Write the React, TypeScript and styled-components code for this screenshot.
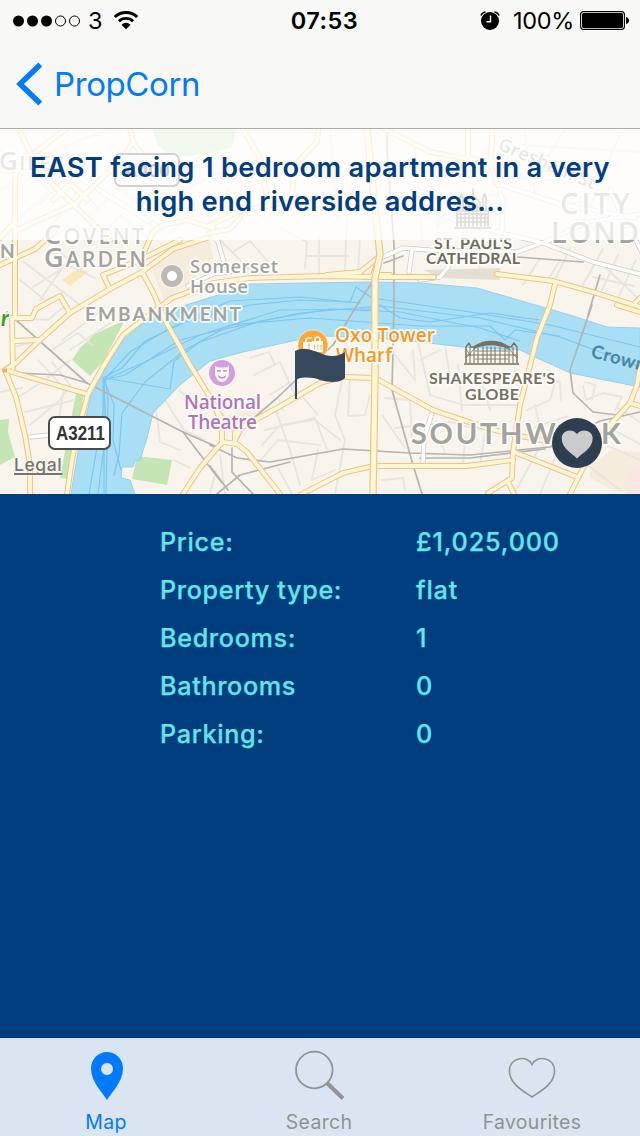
import React from "react";
import styled, { createGlobalStyle } from "styled-components";

const GlobalStyle = createGlobalStyle`
  body { margin: 0; background: #003e80; }
  * { box-sizing: border-box; }
`;

const Screen = styled.div`
  width: 640px;
  height: 1136px;
  display: flex;
  flex-direction: column;
  overflow: hidden;
  background: #003e80;
  font-family: Inter, "Liberation Sans", sans-serif;
`;

const Header = styled.header`
  height: 129px;
  flex: none;
  background: #f8f8f7;
  border-bottom: 1px solid #acacab;
`;

const StatusBar = styled.div`
  height: 40px;
  display: grid;
  grid-template-columns: 1fr auto 1fr;
  align-items: center;
  padding: 1px 11px 0 13px;
  color: #000;
  font-size: 23.5px;
`;

const StatusGroup = styled.div<{ $end?: boolean }>`
  display: flex;
  align-items: center;
  justify-content: ${(p) => (p.$end ? "flex-end" : "flex-start")};
  svg { display: block; flex: none; }
`;

const Carrier = styled.span`
  margin: 0 10px 0 7px;
`;

const Clock = styled.span`
  font-weight: 600;
  font-size: 23.5px;
  letter-spacing: 0.5px;
  padding-left: 7px;
`;

const Percent = styled.span`
  margin: 0 6px 0 13px;
  font-size: 23.5px;
  letter-spacing: -0.35px;
`;

const BackButton = styled.button`
  display: flex;
  align-items: center;
  height: 88px;
  padding: 0 0 0 16px;
  border: 0;
  background: none;
  color: #007aff;
  font: 400 33px Inter, sans-serif;
  letter-spacing: -0.4px;
  svg { display: block; margin-right: 11px; }
`;

const MapArea = styled.section`
  position: relative;
  height: 365px;
  flex: none;
  overflow: hidden;
  background: #f9f5ed;
  > svg { display: block; }
`;

const TitlePanel = styled.h1`
  position: absolute;
  inset: 0 0 auto 0;
  height: 111px;
  margin: 0;
  padding-top: 22px;
  background: rgba(255, 255, 255, 0.75);
  color: #003e80;
  text-align: center;
  font-size: 27.3px;
  line-height: 34px;
  font-weight: 600;
  white-space: nowrap;
`;

const TitleLine = styled.span<{ $spacing: number }>`
  display: block;
  letter-spacing: ${(p) => p.$spacing}px;
`;

const Legal = styled.a`
  position: absolute;
  left: 14px;
  top: 325px;
  color: #747470;
  font-size: 17.5px;
  font-weight: 500;
  line-height: 22px;
  letter-spacing: 0.6px;
  text-decoration: underline;
  text-decoration-thickness: 2px;
  text-decoration-skip-ink: none;
  text-underline-offset: 2px;
  text-shadow: 0 0 2px #fff;
`;

const FavouriteButton = styled.button`
  position: absolute;
  left: 552px;
  top: 289px;
  width: 50px;
  height: 50px;
  padding: 0;
  border: 0;
  border-radius: 50%;
  background: #2c3e50;
  svg { display: block; }
`;

const Details = styled.dl`
  flex: 1;
  margin: 0;
  padding: 24px 0 0 160px;
  color: #62e6ea;
  font-size: 25.2px;
  font-weight: 500;
  -webkit-text-stroke: 0.25px #62e6ea;
`;

const DetailRow = styled.div`
  display: grid;
  grid-template-columns: 256px 1fr;
  align-items: center;
  height: 48px;
`;

const DetailLabel = styled.dt`
  letter-spacing: 0.65px;
`;

const DetailValue = styled.dd`
  margin: 0;
  letter-spacing: 0.85px;
`;

const TabBar = styled.nav`
  height: 99px;
  flex: none;
  display: grid;
  grid-template-columns: 212px 214px 212px;
  border-top: 1px solid #002e60;
  background: #dae5f1;
`;

const Tab = styled.div<{ $active?: boolean }>`
  display: flex;
  flex-direction: column;
  align-items: center;
  color: ${(p) => (p.$active ? "#007aff" : "#929292")};
  font-size: 19.5px;
  line-height: 24px;
  letter-spacing: 0.3px;
  svg { display: block; margin: 8px 0 4px; }
`;

const signalDots = [true, true, true, false, false];

const parks = [
  "M125 320 L95 334 L80 348 L72 360 L90 376 L104 360 Z",
  "M0 420 L9 419 L8 432 L15 457 L0 465 Z",
  "M137 456 L172 460 L167 485 L132 479 Z",
  "M76 393 L84 394 L68 479 L60 478 Z",
  "M152 129 L236 129 L232 148 L205 154 L172 158 L158 145 Z",
];

const river =
  "M71 494 L80 440 L91 396 L107 366 L125 338 L150 318 L180 307 L218 295 L250 284 L370 282 L420 283 L477 288 L570 315 L607 327 L640 328 L640 387 L630 385 L570 373 L520 350 L463 347 L420 342 L373 338 L325 336 L297 340 L243 352 L210 361 L180 385 L153 413 L147 438 L140 460 L135 461 L133 467 L122 467 L121 478 L130 480 L135 494 Z";

const ferries = [
  "M89 494 L103 412 L103 378 L122 368 L145 341 L190 320 L250 305 L300 300 L350 302 L356 287 L372 298 L470 312 L550 325 L640 347",
  "M98 494 L106 430 L104 380 L125 375 L180 340 L220 330 L300 313 L380 306 L480 318 L560 337 L640 367",
  "M106 494 L108 400 L105 378 L170 389 L174 361 L200 342 L260 321 L330 309 L400 312 L480 328 L520 341",
  "M114 475 L119 455 L122 413 L145 382 L185 350 L230 325 L310 318 L420 326 L490 326 L505 340 L515 330 L560 336",
  "M104 494 L104 380 L130 352 L170 328 L230 301 L300 297 L360 303",
  "M121 470 L113 440 L114 405 L104 380 L145 362 L200 335 L280 310 L375 309",
  "M380 305 L400 318 L430 322 L490 313 L540 320",
];

const streets = [
  "M17 318 L48 320 L67 304", "M14 347 L40 340", "M20 396 L45 380 L70 360", "M30 425 L60 400 L70 385 L52 362",
  "M38 360 L64 388 L58 425", "M25 412 L75 400", "M52 350 L78 333 L92 345", "M62 340 L100 312", "M70 350 L112 322",
  "M20 280 L45 300 L65 292", "M24 262 L80 305", "M40 300 L65 264 L95 278", "M55 248 L84 272", "M33 287 L60 270",
  "M0 150 L50 190 L18 220", "M0 190 L55 150 L110 129", "M40 204 L68 176 L100 210", "M55 222 L78 190", "M90 216 L120 188 L140 205",
  "M100 240 L120 215 L150 240", "M118 150 L160 185 L210 150", "M160 200 L220 173 L260 190", "M170 232 L230 190",
  "M220 240 L250 270", "M233 252 L250 241 L270 264", "M282 229 L307 242 L305 268", "M319 238 L319 274", "M306 256 L348 256",
  "M347 210 L345 270", "M360 239 L358 274", "M290 165 L340 175 L370 160", "M275 200 L375 190", "M330 130 L338 220",
  "M395 165 L460 172 L490 165", "M395 198 L500 195", "M415 145 L422 240", "M440 155 L438 228", "M524 129 L535 193", "M565 129 L530 185",
  "M622 129 L580 230", "M520 145 L640 152", "M510 177 L600 184", "M540 258 L523 285", "M560 260 L548 280", "M570 248 L555 280",
  "M603 249 L580 290", "M618 255 L602 290", "M636 260 L618 298", "M593 277 L634 286", "M606 268 L640 300", "M475 240 L480 268",
  "M250 358 L269 352 L275 365", "M254 375 L280 362 L297 400", "M270 395 L290 382 L318 415", "M278 398 L283 410", "M345 365 L335 415 L345 440 L335 494",
  "M262 445 L280 425 L315 420 L340 440", "M265 430 L315 418 L327 450", "M260 461 L278 440 L320 445", "M318 450 L312 480 L335 470",
  "M278 468 L292 494", "M275 408 L290 450 L300 485", "M348 416 L350 377", "M350 416 L365 415 L370 395", "M382 480 L403 478 L405 490",
  "M385 398 L410 400 L412 440", "M395 355 L415 380 L413 350", "M418 342 L430 395", "M395 428 L450 422 L480 430", "M382 415 L405 448",
  "M420 360 L440 350", "M445 345 L450 377", "M458 365 L462 410", "M430 395 L463 405 L520 405", "M480 375 L490 410", "M530 375 L560 382 L561 400",
  "M527 410 L550 400 L555 382", "M583 386 L586 400 L603 393 L622 397 L615 410", "M585 382 L595 385 L592 400", "M527 430 L568 416",
  "M440 440 L445 452", "M465 437 L463 466", "M485 432 L480 465", "M538 450 L515 492", "M555 458 L540 494", "M535 405 L545 450",
  "M594 440 L640 460", "M610 428 L640 444", "M587 465 L620 490", "M618 408 L640 422", "M220 455 L225 494", "M216 470 L210 494",
  "M156 408 L160 442 L180 450", "M165 400 L184 430 L205 440", "M174 460 L190 468", "M179 390 L195 405", "M130 345 L138 340", "M0 392 L22 388",
];

const railways = [
  "M7 312 L87 383 L183 432 L215 446", "M17 373 L60 375 L87 383", "M183 432 L222 483", "M357 305 L333 345 L277 398 L255 417",
  "M377 275 L357 305", "M387 129 L387 150 L394 245 L394 305 L392 390 L413 465 L422 494", "M210 445 L237 458 L270 462 L343 449 L410 453 L470 455 L550 447 L600 421 L640 412",
  "M420 458 L470 458 L545 449", "M600 275 L588 315 L592 305 L570 370 L573 393 L593 412 L617 415", "M217 494 L240 475 L290 462", "M232 448 L232 472 L253 494",
  "M517 257 L583 262", "M384 263 L403 256", "M210 466 L228 490",
];

const whiteRoads = [
  "M80 178 L110 197 L160 228", "M209 228 L218 242 L224 262", "M383 257 L403 248 L430 250 L517 252", "M412 250 L409 272",
  "M420 205 L460 222 L510 235 L543 243 L593 262 L640 274", "M517 252 L550 240 L587 222 L640 214", "M495 183 L560 204 L635 218",
  "M498 185 L503 202 L502 230", "M420 280 L440 277 L449 266", "M188 286 L213 274 L230 272", "M433 410 L424 438 L423 463", "M30 437 L50 435",
  "M636 240 L643 255", "M610 190 L622 215",
];

const mainRoads = [
  "M17 125 L30 152 L53 185 L77 208 L110 240", "M67 128 L23 162 L15 175", "M130 128 L133 142 L123 158 L75 204 L17 230",
  "M133 142 L149 164", "M53 200 L70 184 L88 200", "M243 129 L260 158 L268 205", "M318 129 L317 142 L295 165 L292 192 L300 210",
  "M210 225 L240 211 L300 200", "M210 233 L230 229 L240 218", "M377 125 L430 152 L463 158 L493 162", "M468 125 L468 158", "M493 125 L490 165 L498 185",
  "M0 265 L35 249 L54 232", "M15 168 L15 315 L12 320 L13 368", "M0 238 L15 222",
  "M5 370 L16 363 L42 338 L70 313 L110 289 L142 272 L173 249 L207 238", "M12 318 L32 318 L36 309 L60 296 L70 313",
  "M14 341 L40 340", "M145 250 L153 232 L163 225 L187 220 L213 228", "M110 289 L103 275 L140 260 L180 240",
  "M5 370 L87 394", "M5 370 L16 397 L25 435 L30 465 L30 494",
  "M67 494 L72 460 L78 430 L88 394 L104 365 L123 335 L153 312 L172 298 L213 283 L250 278 L327 276 L375 277 L434 277",
  "M142 272 L153 292 L165 320 L190 365 L213 402 L222 425 L222 442", "M210 402 L224 420 L235 429 L235 443",
  "M183 494 L200 468 L217 448 L223 442 L237 444 L247 452 L280 494", "M235 440 L241 428 L277 408 L320 383 L343 377 L375 378 L433 410 L487 428 L510 434 L545 441",
  "M327 275 L360 272 L380 256", "M367 125 L375 208 L380 255 L375 278 L375 378 L373 465 L373 494", "M380 255 L373 275 L390 275",
  "M300 495 L343 473 L373 466 L467 466 L513 460", "M555 284 L550 305 L537 338 L520 405 L513 452 L512 478 L488 493",
  "M508 482 L514 494", "M514 452 L577 477", "M497 274 L553 281 L593 292 L640 307", "M617 305 L640 312", "M634 304 L640 298",
  "M570 494 L583 468 L607 428 L630 403 L637 385 L640 368", "M630 403 L640 406",
];

type LabelProps = {
  x: number;
  y: number;
  w: number;
  size: number;
  color?: string;
  weight?: number;
  rotate?: number;
  capital?: number;
  children: string;
};

const MapText = styled.text<{ $open?: boolean }>`
  font-family: ${(p) => (p.$open ? '"Open Sans", sans-serif' : 'Lato, "Open Sans", sans-serif')};
  font-variant-ligatures: none;
  paint-order: stroke;
  stroke: rgba(255, 255, 255, 0.85);
  stroke-width: 3.5px;
  stroke-linejoin: round;
`;

/* A map label: x is the left end, y the baseline, w the set width;
   capital gives the first letter a larger size of its own. */
const Label = ({ x, y, w, size, color = "#a3a39e", weight = 700, rotate = 0, capital, children }: LabelProps) => (
  <MapText $open={weight < 700} x={x} y={y} textLength={w} fontSize={size} fontWeight={weight} fill={color} transform={`rotate(${rotate} ${x} ${y})`}>
    {capital ? <><tspan fontSize={capital}>{children[0]}</tspan>{children.slice(1)}</> : children}
  </MapText>
);

const CityMap = () => (
  <svg width="640" height="365" viewBox="0 129 640 365" fill="none" strokeLinejoin="round" strokeLinecap="round">
    <path d="M149 262 L175 250 L210 241 L214 262 L190 282 L164 300 Z" fill="#f5ecdc" />
    <path d="M62 280 L78 268 L88 272 L70 286 Z" fill="#f8e7b8" />
    <path d="M222 418 L245 408 L262 410 L240 424 Z" fill="#f5eddc" />
    <path d="M590 465 L612 450 L640 452 L640 494 L612 490 L590 478 Z" fill="#f5ecdc" />
    <path d="M628 470 L640 468 L640 494 L625 494 Z" fill="#fae6e2" />
    <path d="M424 270 L500 268 L500 280 L440 278 Z" fill="#e4dfd2" />
    {parks.map((d) => <path key={d} d={d} fill="#c3e6b4" />)}
    {streets.map((d) => <path key={d} d={d} stroke="#e8e5df" strokeWidth="1.8" />)}
    <path d={river} fill="#a9dff5" stroke="#94d2f0" strokeWidth="1" />
    {ferries.map((d) => <path key={d} d={d} stroke="#7cc6f2" strokeWidth="1.2" />)}
    {railways.map((d) => <path key={d} d={d} stroke="#b5b4b2" strokeWidth="1.7" />)}
    {whiteRoads.map((d) => <path key={d} d={d} stroke="#cdc7c2" strokeWidth="5" />)}
    {whiteRoads.map((d) => <path key={d} d={d} stroke="#ffffff" strokeWidth="3.6" />)}
    {mainRoads.map((d) => <path key={d} d={d} stroke="#f4bf85" strokeWidth="5.800" />)}
    {mainRoads.map((d) => <path key={d} d={d} stroke="#fdf7d3" strokeWidth="3.800" />)}
    <path d="M367 129 L375 208 L380 255 L375 278 L375 378 L373 494" stroke="#f4bf85" strokeWidth="7.400" />
    <path d="M367 129 L375 208 L380 255 L375 278 L375 378 L373 494" stroke="#fdf7d3" strokeWidth="5.200" />
    <rect x="3" y="368.500" width="4" height="4" fill="#efb069" />

    <Label x={-1} y={170} w={64} size={20} weight={600} capital={26}>GILES</Label>
    <Label x={44} y={244} w={100} size={21.500} weight={600} capital={27}>COVENT</Label>
    <Label x={44} y={267} w={102} size={21.500} weight={600} capital={27}>GARDEN</Label>
    <Label x={0} y={258} w={15} size={19}>N</Label>
    <Label x={190} y={273} w={88} size={18.500} weight={600}>Somerset</Label>
    <Label x={190} y={293} w={58} size={18.500} weight={600}>House</Label>
    <Label x={85} y={321} w={156} size={19}>EMBANKMENT</Label>
    <Label x={497} y={149} w={104} size={18} weight={600} rotate={23}>Gresham St</Label>
    <Label x={560} y={214} w={70} size={29} weight={600}>CITY</Label>
    <Label x={551} y={243} w={88} size={29} weight={600}>LOND</Label>
    <Label x={434} y={249} w={78} size={16} color="#6f6c5a">ST. PAUL'S</Label>
    <Label x={426} y={264} w={94} size={16} color="#6f6c5a">CATHEDRAL</Label>
    <Label x={429} y={384} w={126} size={16} color="#77715f">SHAKESPEARE'S</Label>
    <Label x={465} y={400} w={54} size={16} color="#77715f">GLOBE</Label>
    <Label x={411} y={444} w={210} size={29}>SOUTHWARK</Label>
    <Label x={335} y={342} w={100} size={19} weight={600} color="#f7981d">Oxo Tower</Label>
    <Label x={336} y={362} w={56} size={19} weight={600} color="#f7981d">Wharf</Label>
    <Label x={184} y={409} w={77} size={19} weight={600} color="#b273b6">National</Label>
    <Label x={188} y={429} w={69} size={19} weight={600} color="#b273b6">Theatre</Label>
    <MapText x={590} y={357} fontSize="18.500" fontWeight="700" fill="#4b86a5" letterSpacing=".4" transform="rotate(15 590 357)" style={{ stroke: "none" }}>Crown</MapText>
    <MapText x={1} y={326} fontSize="22" fontWeight="700" fontStyle="italic" fill="#38a116">r</MapText>

    <circle cx="172" cy="276" r="12" fill="#fff" opacity=".7" />
    <circle cx="172" cy="276" r="8" fill="#fff" stroke="#bdbab4" strokeWidth="6" />

    <circle cx="222" cy="373" r="14" fill="#fff" opacity=".7" />
    <circle cx="222" cy="373" r="13" fill="#d49ddd" />
    <path d="M215 366 C219 368 225 368 229 366 L229 374 C228 379 225 382 222 382 C219 382 216 379 215 374 Z" fill="#fff" />
    <path d="M217.500 371 h3 M223.500 371 h3 M218.500 376 Q222 380 225.500 376" stroke="#c782d2" strokeWidth="1.300" />

    <circle cx="313" cy="345" r="15.500" fill="#fff" opacity=".7" />
    <circle cx="313" cy="345" r="14.800" fill="#fba93b" />
    <path d="M303 342 h9 v10 h-9 z M312 341 h11 v11 h-11 z" fill="#fff" />
    <path d="M306 342 v-2 q0-2 3-2 h2 M315 341 v-1 q0-3 2.500-3 t2.500 3 v1" stroke="#fff" strokeWidth="1.600" />
    <path d="M314.500 345 v4 M318 345 v4 M321 345 v4 M309 344 v8" stroke="#fba93b" strokeWidth="1.200" strokeDasharray="2 1.500" />

    {/* Globe theatre */}
    <path d="M464 364 H519 M466 363 V347 L469 343 L471 347 H474 Q491 337 508 347 H511 L514 343 L517 347 V363" stroke="#77715f" strokeWidth="1.400" strokeLinecap="butt" />
    <path d="M474 346 L482 342 Q491 339.500 501 342 L509 346 L508 349 Q491 341.500 474 349 Z" fill="#77715f" />
    <path d="M466 355 H517 M470 347 V363 M474 348 V363 M478 348 V363 M483 347 V363 M487 347 V363 M491 347 V363 M495 347 V363 M500 347 V363 M505 348 V363 M509 348 V363 M513 347 V363" stroke="#77715f" strokeWidth="1" />
    <path d="M475 351 H508 M475 359 H508 M466 349 L470 355 M474 349 L466 358 M509 349 L517 358" stroke="#77715f" strokeWidth=".8" />

    {/* St Paul's */}
    <path d="M455 228 H490 M457 226 V211 H488 V226 M460 211 V198 L461 194 L463 198 V211 M483 211 V198 L484.500 194 L486 198 V211 M466 211 V203 Q473 192 480 203 V211 M473 196 V189" stroke="#77715f" strokeWidth="1.700" />
    <path d="M457 218 H488 M461 213 V226 M465 213 V226 M469 204 V226 M473 198 V226 M477 204 V226 M481 213 V226 M485 213 V226 M458 222 H488 M458 214 H487 M467 207 H479" stroke="#77715f" strokeWidth="1.500" />

    <rect x="115" y="154" width="64" height="32" rx="6" fill="#fff" stroke="#4b4b4b" strokeWidth="2" />
    <text x="124" y="177" textLength="46" lengthAdjust="spacingAndGlyphs" fontFamily="Liberation Sans" fontWeight="700" fontSize="19" fill="#444">A400</text>
    <rect x="49" y="417" width="61" height="32" rx="6" fill="#fff" stroke="#4b4b4b" strokeWidth="2" />
    <text x="56" y="440" textLength="49" lengthAdjust="spacingAndGlyphs" fontFamily="Liberation Sans" fontWeight="700" fontSize="20" fill="#333">A3211</text>

    <path d="M295 351 C304 346 312 350 320 353 C328 357 338 357 345 352 V378 C338 384 328 382 320 380 C312 377 304 377 297 379 V399 H295 Z" fill="#34495e" />
  </svg>
);

const details = [
  ["Price:", "£1,025,000"],
  ["Property type:", "flat"],
  ["Bedrooms:", "1"],
  ["Bathrooms", "0"],
  ["Parking:", "0"],
];

export default function App() {
  return (
    <Screen>
      <GlobalStyle />
      <Header>
        <StatusBar>
          <StatusGroup>
            <svg width="68" height="12" viewBox="0 0 68 12">
              {signalDots.map((on, i) => (
                <circle key={i} cx={5.5 + i * 14} cy="6" r={on ? 5.5 : 5} fill={on ? "#000" : "none"} stroke={on ? "none" : "#000"} />
              ))}
            </svg>
            <Carrier>3</Carrier>
            <svg width="26" height="19" viewBox="0 0 26 19" fill="none" stroke="#000">
              <path d="M1.800 6 A16 16 0 0 1 24.200 6" strokeWidth="3" />
              <path d="M5.900 10.300 A10.200 10.200 0 0 1 20.100 10.300" strokeWidth="2.800" />
              <path d="M8.500 13.700 Q13 9.800 17.500 13.700 L13 18.200 Z" fill="#000" stroke="none" />
            </svg>
          </StatusGroup>
          <Clock>07:53</Clock>
          <StatusGroup $end>
            <svg width="20" height="19" viewBox="0 0 20 19" fill="none">
              <circle cx="10" cy="10" r="9" fill="#000" />
              <path d="M1 4.500 Q2 1.500 5.500 1 M19 4.500 Q18 1.500 14.500 1" stroke="#000" strokeWidth="1.500" />
              <path d="M10.500 4.500 V10.700 H6.500" stroke="#fff" strokeWidth="1.400" />
            </svg>
            <Percent>100%</Percent>
            <svg width="49" height="19" viewBox="0 0 49 19">
              <rect x=".6" y=".6" width="43.800" height="17.800" rx="3" fill="none" stroke="#000" strokeWidth="1.100" />
              <rect x="2" y="2" width="41" height="15" rx="1.500" />
              <path d="M46 6 Q49 7 49 9.500 T46 13 Z" />
            </svg>
          </StatusGroup>
        </StatusBar>
        <BackButton>
          <svg width="27" height="44" viewBox="0 0 27 44" fill="none">
            <path d="M24.300 2.500 L4 22 L24.300 41.500" stroke="#007aff" strokeWidth="5.400" />
          </svg>
          PropCorn
        </BackButton>
      </Header>

      <MapArea>
        <CityMap />
        <TitlePanel>
          <TitleLine $spacing={0.3}>EAST facing 1 bedroom apartment in a very</TitleLine>
          <TitleLine $spacing={0.25}>high end riverside addres...</TitleLine>
        </TitlePanel>
        <Legal>Legal</Legal>
        <FavouriteButton aria-label="Favourite">
          <svg width="50" height="50" viewBox="0 0 50 50">
            <path d="M25 40.500 C20 35.500 9.700 30 9.700 20.500 C9.700 12 20.500 10 25 16 C29.500 10 40.700 12 40.700 20.500 C40.700 30 30 35.500 25 40.500 Z" fill="#cbcbcb" />
          </svg>
        </FavouriteButton>
      </MapArea>

      <Details>
        {details.map(([label, value]) => (
          <DetailRow key={label}>
            <DetailLabel>{label}</DetailLabel>
            <DetailValue>{value}</DetailValue>
          </DetailRow>
        ))}
      </Details>

      <TabBar>
        <Tab $active>
          <svg width="60" height="60" viewBox="0 0 60 60">
            <path fillRule="evenodd" d="M31 54 C27 47 15 36 15 22.500 A16 16.500 0 0 1 47 22.500 C47 36 35 47 31 54 Z M31 17 a6 6 0 1 0 .01 0 Z" fill="#007aff" />
          </svg>
          Map
        </Tab>
        <Tab>
          <svg width="60" height="60" viewBox="0 0 60 60" fill="none" stroke="#929292">
            <circle cx="25.300" cy="24" r="18.300" strokeWidth="1.800" />
            <path d="M38 37 L54 52.500" strokeWidth="4" />
          </svg>
          Search
        </Tab>
        <Tab>
          <svg width="60" height="60" viewBox="0 0 60 60" fill="none" stroke="#929292" strokeWidth="1.600">
            <path d="M30 18.500 C26 9 7.500 10.500 7.500 25 C7.500 38 21 45 30 51 C39 45 52.500 38 52.500 25 C52.500 10.500 34 9 30 18.500 Z" />
          </svg>
          Favourites
        </Tab>
      </TabBar>
    </Screen>
  );
}
